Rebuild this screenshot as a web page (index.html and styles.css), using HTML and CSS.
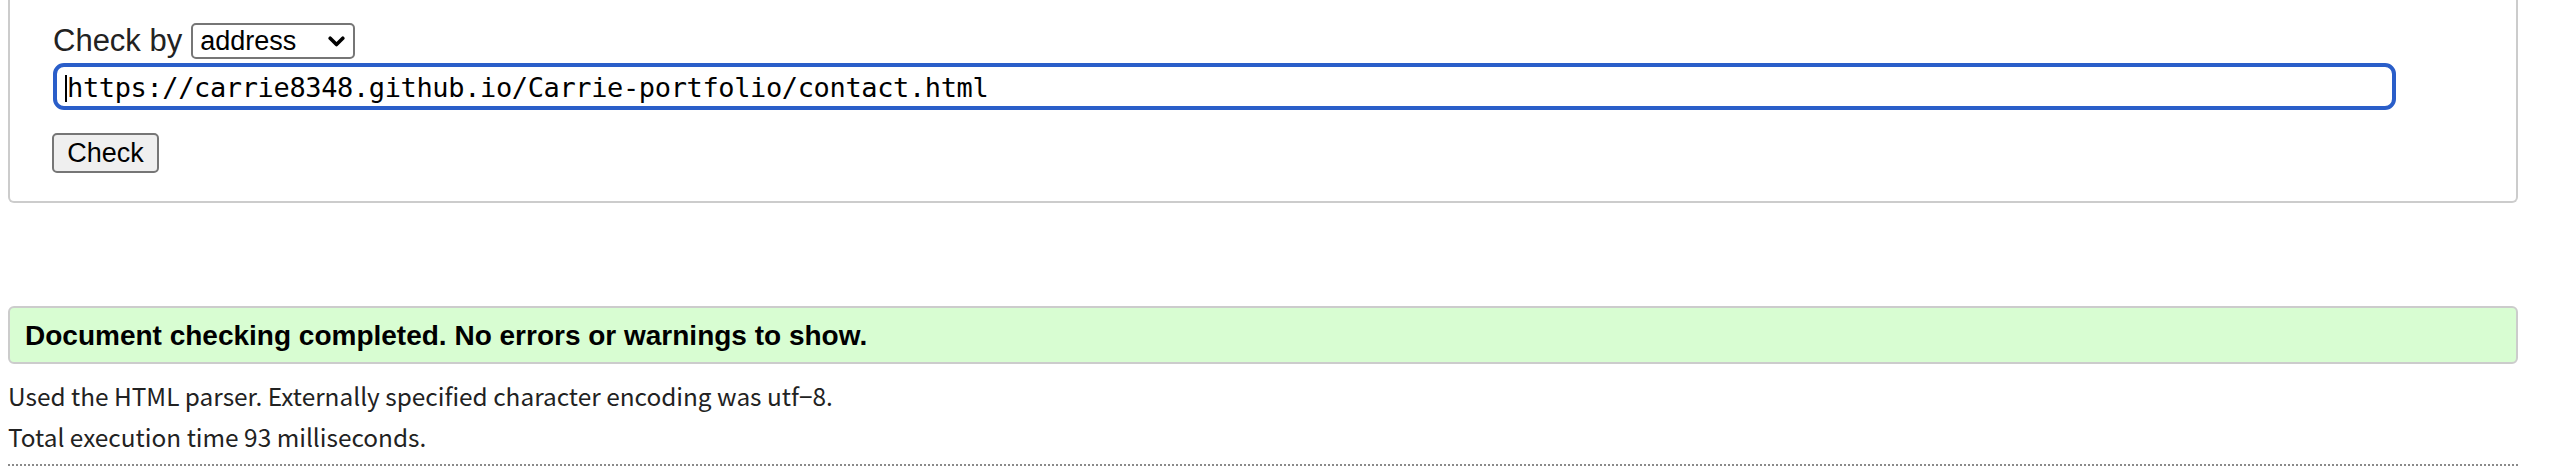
FILE: index.html
```html
<!DOCTYPE html>
<html lang="en">
<head>
<meta charset="utf-8">
<title>Nu Html Checker</title>
<link rel="stylesheet" href="styles.css">
</head>
<body>
<main class="page">
  <form class="checker">
    <div class="by-row">
      <label class="by-label">Check by</label>
      <div class="select">
        <span class="select-value">address</span>
        <svg class="chevron" width="17" height="11" viewBox="0 0 17 11"><path d="M2.2 2.2 L8.5 8.5 L14.8 2.2" fill="none" stroke="#000" stroke-width="3.6" stroke-linecap="round" stroke-linejoin="round"/></svg>
      </div>
    </div>
    <div class="url-input"><span class="caret"></span><span class="url-text">https://carrie8348.github.io/Carrie-portfolio/contact.html</span></div>
    <div class="btn-row"><button type="button" class="btn">Check</button></div>
  </form>

  <div class="success">
    <h2 class="success-text">Document checking completed. No errors or warnings to show.</h2>
  </div>
  <p class="details details-first">Used the HTML parser. Externally specified character encoding was utf&minus;8.</p>
  <p class="details">Total execution time 93 milliseconds.</p>
  <hr class="dotted">
</main>
</body>
</html>
```

FILE: styles.css
```css
html, body {
  margin: 0;
  padding: 0;
  background: #ffffff;
}

body {
  font-family: "Liberation Sans", Arial, sans-serif;
  color: #222222;
}

.page {
  padding: 0 38px 0 8px;
}

.checker {
  border: 2px solid #cccccc;
  border-top: 0;
  border-radius: 0 0 6px 6px;
  padding: 23px 0 28px 43px;
  margin: 0;
}

.by-row {
  display: flex;
  align-items: center;
  height: 36px;
  gap: 9px;
}

.by-label {
  font-size: 31px;
  color: #222222;
  line-height: 36px;
}

.select {
  box-sizing: border-box;
  width: 164px;
  height: 36px;
  border: 2px solid #767676;
  border-radius: 5px;
  display: flex;
  align-items: center;
  justify-content: space-between;
  padding: 0 8px 0 7px;
  background: #ffffff;
}

.select-value {
  font-size: 27px;
  color: #000000;
  line-height: 1;
}

.chevron {
  display: block;
}

.url-input {
  box-sizing: border-box;
  margin-top: 4px;
  width: 2343px;
  height: 47px;
  border: 4px solid #2a5ec9;
  border-radius: 11px;
  display: flex;
  align-items: center;
  padding-left: 8px;
  background: #ffffff;
}

.caret {
  display: inline-block;
  width: 2px;
  height: 27px;
  background: #000000;
  margin-top: 4px;
}

.url-text {
  font-family: "DejaVu Sans Mono", "Liberation Mono", monospace;
  font-size: 27px;
  letter-spacing: -0.37px;
  color: #000000;
  margin-top: 1px;
}

.btn-row {
  margin-top: 23px;
  display: flex;
}

.btn {
  box-sizing: border-box;
  width: 107px;
  height: 40px;
  margin: 0 0 0 -1px;
  padding: 0;
  border: 2px solid #767676;
  border-radius: 5px;
  background: #efefef;
  font-family: "Liberation Sans", Arial, sans-serif;
  font-size: 27px;
  color: #000000;
}

.success {
  margin-top: 103px;
  box-sizing: border-box;
  height: 58px;
  border: 2px solid #cccccc;
  border-radius: 6px;
  background: #d8fdd2;
  display: flex;
  align-items: center;
  padding-left: 15px;
}

.success-text {
  margin: 0;
  font-size: 28px;
  font-weight: bold;
  color: #000000;
  line-height: 1;
  padding-top: 2px;
}

.details {
  margin: 0;
  font-family: "Noto Sans CJK SC", "Noto Sans", sans-serif;
  font-size: 24.4px;
  line-height: 41px;
  color: #222222;
}

.details-first {
  margin-top: 11px;
}

.dotted {
  margin: 7px 0 0 0;
  border: 0;
  border-top: 2px dotted #8a8a8a;
  height: 0;
}
```
